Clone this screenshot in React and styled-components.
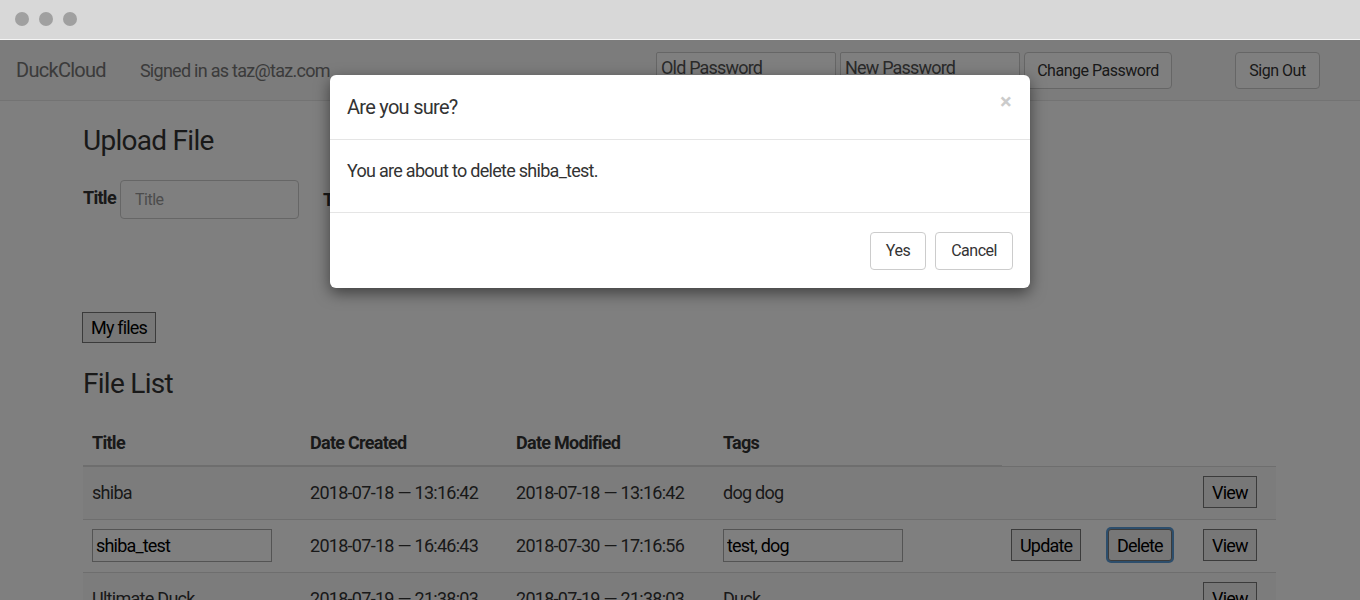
import React from "react";
import styled, { createGlobalStyle } from "styled-components";

const GlobalStyle = createGlobalStyle`
  html, body {
    margin: 0;
    padding: 0;
    background: #ffffff;
  }
  body {
    font-family: Roboto, "Liberation Sans", sans-serif;
    color: #333;
  }
  * {
    box-sizing: border-box;
  }
`;

const files = [
  {
    title: "shiba",
    created: "2018-07-18 — 13:16:42",
    modified: "2018-07-18 — 13:16:42",
    tags: "dog dog",
    editable: false,
  },
  {
    title: "shiba_test",
    created: "2018-07-18 — 16:46:43",
    modified: "2018-07-30 — 17:16:56",
    tags: "test, dog",
    editable: true,
  },
  {
    title: "Ultimate Duck",
    created: "2018-07-19 — 21:38:03",
    modified: "2018-07-19 — 21:38:03",
    tags: "Duck",
    editable: false,
  },
];

const App = () => {
  return (
    <>
      <GlobalStyle />
      <Window>
        <TitleBar>
          <Dot />
          <Dot />
          <Dot />
        </TitleBar>
        <Page>
          <Navbar>
            <Brand>DuckCloud</Brand>
            <SignedIn>Signed in as taz@taz.com</SignedIn>
            <NavForm>
              <NavInput placeholder="Old Password" />
              <NavInput placeholder="New Password" />
              <NavButton>Change Password</NavButton>
            </NavForm>
            <NavButton $signOut>Sign Out</NavButton>
          </Navbar>

          <Container>
            <Heading>Upload File</Heading>
            <UploadForm>
              <Label>Title</Label>
              <TitleInput placeholder="Title" />
              <Label $gap>Tags</Label>
            </UploadForm>

            <PlainButton $files>My files</PlainButton>

            <Heading $list>File List</Heading>
            <Table>
              <colgroup>
                <col style={{ width: 218 }} />
                <col style={{ width: 206 }} />
                <col style={{ width: 207 }} />
                <col style={{ width: 288 }} />
                <col style={{ width: 97 }} />
                <col style={{ width: 95 }} />
                <col style={{ width: 82 }} />
              </colgroup>
              <thead>
                <tr>
                  <Th>Title</Th>
                  <Th>Date Created</Th>
                  <Th>Date Modified</Th>
                  <Th>Tags</Th>
                </tr>
              </thead>
              <tbody>
                {files.map((f, i) => (
                  <Row key={f.title} $striped={i % 2 === 0}>
                    <Td>
                      {f.editable ? <CellInput defaultValue={f.title} /> : f.title}
                    </Td>
                    <Td>{f.created}</Td>
                    <Td>{f.modified}</Td>
                    <Td>
                      {f.editable ? <CellInput defaultValue={f.tags} /> : f.tags}
                    </Td>
                    <Td>{f.editable && <PlainButton>Update</PlainButton>}</Td>
                    <Td>
                      {f.editable && <PlainButton $focused>Delete</PlainButton>}
                    </Td>
                    <Td>
                      <PlainButton>View</PlainButton>
                    </Td>
                  </Row>
                ))}
              </tbody>
            </Table>
          </Container>

          <Backdrop />
          <Dialog>
            <DialogHeader>
              <DialogTitle>Are you sure?</DialogTitle>
              <Close>×</Close>
            </DialogHeader>
            <DialogBody>You are about to delete shiba_test.</DialogBody>
            <DialogFooter>
              <DialogButton>Yes</DialogButton>
              <DialogButton>Cancel</DialogButton>
            </DialogFooter>
          </Dialog>
        </Page>
      </Window>
    </>
  );
};

export default App;

const Window = styled.div`
  width: 1360px;
  height: 600px;
  overflow: hidden;
  display: flex;
  flex-direction: column;
`;

const TitleBar = styled.div`
  height: 40px;
  flex-shrink: 0;
  background: #d8d8d8;
  border-bottom: 1px solid #f4f4f4;
  display: flex;
  align-items: center;
  gap: 10px;
  padding: 0 0 1px 15px;
`;

const Dot = styled.span`
  width: 14px;
  height: 14px;
  border-radius: 50%;
  background: #a0a0a0;
`;

const Page = styled.div`
  position: relative;
  flex: 1;
  background: #fff;
  letter-spacing: -0.045em;
`;

const Navbar = styled.div`
  height: 61px;
  background: #f8f8f8;
  border-bottom: 1px solid #e7e7e7;
  display: flex;
  align-items: center;
  padding: 0 40px 0 16px;
`;

const Brand = styled.div`
  font-size: 20px;
  color: #777;
  margin-right: 34px;
`;

const SignedIn = styled.div`
  font-size: 18px;
  color: #777;
  flex: 1;
`;

const NavForm = styled.div`
  display: flex;
  align-items: center;
  gap: 4px;
  margin-right: 63px;
`;

const NavInput = styled.input`
  width: 180px;
  height: 34px;
  margin-top: -2px;
  border: 1px solid #ccc;
  border-radius: 2px;
  padding: 0 4px 4px;
  font-family: inherit;
  font-size: 18px;
  letter-spacing: -0.045em;
  background: #fff;
  &::placeholder {
    color: #555;
  }
`;

const NavButton = styled.button`
  height: 37px;
  padding: 0 10px;
  border: 1px solid #ccc;
  border-radius: 4px;
  background: #fff;
  color: #333;
  font-family: inherit;
  font-size: 16px;
  letter-spacing: -0.03em;
  white-space: nowrap;
  width: ${(p) => (p.$signOut ? "85px" : "148px")};
`;

const Container = styled.div`
  padding: 15px 84px 0 83px;
`;

const Heading = styled.h3`
  margin: ${(p) => (p.$list ? "24px 0 18px" : "8px 0 22px")};
  font-size: 28px;
  font-weight: 400;
  line-height: 34px;
  color: #333;
`;

const UploadForm = styled.div`
  display: flex;
  align-items: center;
  height: 39px;
  margin-bottom: 93px;
`;

const Label = styled.label`
  font-size: 18px;
  font-weight: 700;
  margin-right: 4px;
  margin-left: ${(p) => (p.$gap ? "24px" : "0")};
  margin-top: ${(p) => (p.$gap ? "0" : "-4px")};
`;

const TitleInput = styled.input`
  width: 179px;
  height: 39px;
  border: 1px solid #ccc;
  border-radius: 4px;
  padding: 0 14px;
  font-family: inherit;
  font-size: 16px;
  letter-spacing: -0.03em;
  &::placeholder {
    color: #999;
  }
`;

const PlainButton = styled.button`
  display: inline-block;
  height: ${(p) => (p.$files ? "31px" : "32px")};
  padding: 0 8px;
  margin-left: ${(p) => (p.$files ? "-1px" : "0")};
  border: 1px solid #767676;
  border-radius: ${(p) => (p.$focused ? "3px" : "0")};
  background: #efefef;
  color: #000;
  font-family: inherit;
  font-size: 18px;
  letter-spacing: -0.045em;
  box-shadow: ${(p) => (p.$focused ? "0 0 0 2px #5b9dd9" : "none")};
`;

const Table = styled.table`
  width: 1193px;
  border-collapse: collapse;
  table-layout: fixed;
  font-size: 18px;
`;

const Th = styled.th`
  text-align: left;
  font-weight: 700;
  padding: 0 9px;
  height: 47px;
  vertical-align: middle;
  border-bottom: 2px solid #ddd;
`;

const Row = styled.tr`
  background: ${(p) => (p.$striped ? "#f9f9f9" : "#fff")};
`;

const Td = styled.td`
  height: 53px;
  padding: 0 9px 1px 9px;
  border-top: 1px solid #ddd;
  vertical-align: middle;
  white-space: nowrap;
`;

const CellInput = styled.input`
  width: 180px;
  height: 33px;
  border: 1px solid #a9a9a9;
  padding: 0 3px;
  font-family: inherit;
  font-size: 18px;
  letter-spacing: -0.045em;
  color: #000;
`;

const Backdrop = styled.div`
  position: absolute;
  inset: 0;
  background: rgba(0, 0, 0, 0.5);
`;

const Dialog = styled.div`
  position: absolute;
  top: 35px;
  left: 330px;
  width: 700px;
  background: #fff;
  border-radius: 6px;
  box-shadow: 0 5px 15px rgba(0, 0, 0, 0.5);
`;

const DialogHeader = styled.div`
  height: 65px;
  padding: 0 17px;
  border-bottom: 1px solid #e5e5e5;
  display: flex;
  align-items: center;
  justify-content: space-between;
`;

const DialogTitle = styled.h4`
  margin: 0;
  font-size: 20px;
  font-weight: 400;
  color: #333;
`;

const Close = styled.span`
  font-size: 22px;
  font-weight: 700;
  color: #000;
  opacity: 0.2;
  margin-top: -12px;
  margin-right: 2px;
`;

const DialogBody = styled.div`
  height: 73px;
  padding: 0 17px 12px;
  display: flex;
  align-items: center;
  font-size: 18px;
  border-bottom: 1px solid #e5e5e5;
`;

const DialogFooter = styled.div`
  height: 75px;
  padding: 0 17px;
  display: flex;
  justify-content: flex-end;
  align-items: center;
  gap: 9px;
`;

const DialogButton = styled.button`
  height: 38px;
  padding: 0 15px;
  border: 1px solid #ccc;
  border-radius: 4px;
  background: #fff;
  color: #333;
  font-family: inherit;
  font-size: 16px;
  letter-spacing: -0.03em;
`;
